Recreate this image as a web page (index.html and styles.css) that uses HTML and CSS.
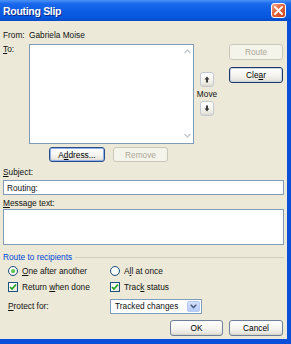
FILE: index.html
```html
<!DOCTYPE html>
<html>
<head>
<meta charset="utf-8">
<link rel="stylesheet" href="styles.css">
</head>
<body>
<div class="window">
  <div class="titlebar">
    <span class="title">Routing Slip</span>
    <span class="close"><svg width="9" height="9" viewBox="0 0 9 9"><path d="M1 1L8 8M8 1L1 8" stroke="#fff" stroke-width="1.8" stroke-linecap="round"/></svg></span>
  </div>
  <div class="body">
    <div class="from-row"><span class="lead">From:</span><span>Gabriela Moise</span></div>
    <div class="to-section">
      <span class="lead"><u>T</u>o:</span>
      <div class="listbox">
        <div class="scroll">
          <svg width="7" height="5" viewBox="0 0 7 5"><path d="M0.5 4L3.5 1L6.5 4" fill="none" stroke="#C2C6CC" stroke-width="1.3"/></svg>
          <svg width="7" height="5" viewBox="0 0 7 5"><path d="M0.5 1L3.5 4L6.5 1" fill="none" stroke="#C2C6CC" stroke-width="1.3"/></svg>
        </div>
      </div>
      <div class="move-col">
        <span class="btn mini"><svg width="6" height="7" viewBox="0 0 6 7"><path d="M3 0.5L5.5 3.5H4V6.5H2V3.5H0.5Z" fill="#3A3A3A"/></svg></span>
        <span class="move-label">Move</span>
        <span class="btn mini"><svg width="6" height="7" viewBox="0 0 6 7"><path d="M3 6.5L5.5 3.5H4V0.5H2V3.5H0.5Z" fill="#3A3A3A"/></svg></span>
      </div>
      <div class="btn-col">
        <span class="btn wide disabled">Route</span>
        <span class="btn wide strong">Cle<u>a</u>r</span>
      </div>
    </div>
    <div class="addr-row">
      <span class="btn focus addr">A<u>d</u>dress...</span>
      <span class="btn disabled remove">Remove</span>
    </div>
    <div class="field-label"><u>S</u>ubject:</div>
    <div class="textbox subject">Routing:</div>
    <div class="field-label msg"><u>M</u>essage text:</div>
    <div class="textbox message"></div>
    <div class="group-title"><span>Route to recipients</span><span class="rule"></span></div>
    <div class="options">
      <div class="opt"><span class="radio checked"></span><span><u>O</u>ne after another</span></div>
      <div class="opt"><span class="radio"></span><span>A<u>l</u>l at once</span></div>
      <div class="opt"><span class="check"><svg width="8" height="8" viewBox="0 0 8 8"><path d="M1 4L3 6L7 1.5" fill="none" stroke="#21A121" stroke-width="1.7"/></svg></span><span>Return <u>w</u>hen done</span></div>
      <div class="opt"><span class="check"><svg width="8" height="8" viewBox="0 0 8 8"><path d="M1 4L3 6L7 1.5" fill="none" stroke="#21A121" stroke-width="1.7"/></svg></span><span>Trac<u>k</u> status</span></div>
      <div class="opt"><span><u>P</u>rotect for:</span></div>
      <div class="opt">
        <div class="select"><span class="sel-text">Tracked changes</span><span class="sel-btn"><svg width="7" height="5" viewBox="0 0 7 5"><path d="M0.7 0.8L3.5 3.6L6.3 0.8" fill="none" stroke="#4D6185" stroke-width="1.6"/></svg></span></div>
      </div>
    </div>
    <div class="footer">
      <span class="btn ok">OK</span>
      <span class="btn cancel">Cancel</span>
    </div>
  </div>
</div>
</body>
</html>
```
FILE: styles.css
```css
* { box-sizing: border-box; }
html, body { margin: 0; padding: 0; }
body {
  width: 291px;
  height: 344px;
  overflow: hidden;
  background: #ECE9D8;
  font-family: "Liberation Sans", Arial, sans-serif;
  font-size: 8.3px;
  line-height: 10px;
  color: #111;
}
u { text-decoration: underline; text-underline-offset: 1px; }
.window { display: flex; flex-direction: column; height: 344px; }
.titlebar {
  height: 21px;
  flex: none;
  display: flex;
  align-items: center;
  justify-content: space-between;
  padding: 0 5px 0 3px;
  background: linear-gradient(#4A92F8 0%, #1A68EC 18%, #0A5CE4 55%, #0656DC 85%, #0449C8 100%);
}
.title {
  color: #fff;
  font-weight: bold;
  font-size: 10.5px;
  letter-spacing: -0.3px;
  text-shadow: 1px 1px 0 #0A2A8A;
}
.close {
  width: 15px;
  height: 15px;
  border: 1px solid #fff;
  border-radius: 3px;
  background: linear-gradient(135deg, #F2A98C 0%, #E2643C 45%, #C9441F 100%);
  display: flex;
  align-items: center;
  justify-content: center;
}
.body {
  flex: 1;
  display: flex;
  flex-direction: column;
  padding: 9px 3px 0 3px;
  border-right: 4px solid #0B4FD8;
  border-bottom: 5px solid #0B4FD8;
}
.from-row { display: flex; height: 10px; }
.lead { width: 26px; flex: none; }
.to-section { margin-top: 4px; display: flex; align-items: flex-start; }
.listbox {
  width: 165px;
  height: 100px;
  background: #fff;
  border: 1px solid #7F9DB9;
  display: flex;
  justify-content: flex-end;
}
.scroll {
  width: 11px;
  display: flex;
  flex-direction: column;
  justify-content: space-between;
  align-items: center;
  padding: 4px 0 5px;
}
.btn {
  display: flex;
  align-items: center;
  justify-content: center;
  border: 1px solid #4E6A8E;
  border-radius: 3px;
  background: linear-gradient(#FFFFFF 0%, #F6F5F1 50%, #E9E7DF 85%, #D8D3C6 100%);
  color: #000;
}
.btn.disabled {
  border-color: #C9C7BA;
  background: #F5F4EA;
  color: #ACA899;
}
.btn.strong { border-color: #1E3A66; box-shadow: inset 0 0 0 1px #C8D3E4; }
.btn.focus { border-color: #2B4E86; box-shadow: inset 0 0 0 1px #8FB0EA; }
.move-col {
  margin-left: 3px;
  margin-top: 28px;
  width: 20px;
  display: flex;
  flex-direction: column;
  align-items: center;
  gap: 2px;
}
.btn.mini { width: 14px; height: 15px; border-color: #C4C8D0; }
.move-label { height: 10px; }
.btn-col { margin-left: 12px; display: flex; flex-direction: column; gap: 7px; }
.btn.wide { width: 54px; height: 16px; }
.addr-row { margin-top: 3px; padding-left: 46px; display: flex; gap: 8px; }
.addr { width: 56px; height: 15px; }
.remove { width: 55px; height: 15px; }
.field-label { margin-top: 5px; height: 10px; }
.field-label.msg { margin-top: 3px; }
.textbox { background: #fff; border: 1px solid #7F9DB9; }
.subject { margin-top: 3px; height: 15px; padding: 2px 0 0 3px; }
.message { margin-top: 1px; height: 36px; }
.group-title {
  margin-top: 7px;
  height: 10px;
  display: flex;
  align-items: center;
  color: #0046D5;
}
.rule { flex: 1; height: 1px; background: #D0D0BF; margin-left: 3px; }
.options {
  margin-top: 1px;
  padding-left: 5px;
  display: grid;
  grid-template-columns: 102px auto;
  grid-template-rows: 16px 16px 22px;
}
.opt { display: flex; align-items: center; gap: 4px; }
.radio {
  width: 10px;
  height: 10px;
  border: 1px solid #1C5180;
  border-radius: 50%;
  background: radial-gradient(circle at 40% 40%, #FFFFFF 30%, #E2E1D8 100%);
  display: flex;
  align-items: center;
  justify-content: center;
}
.radio.checked::after {
  content: "";
  width: 4px;
  height: 4px;
  border-radius: 50%;
  background: radial-gradient(circle at 35% 35%, #7ADB5E, #21A121);
}
.check {
  width: 10px;
  height: 10px;
  border: 1px solid #1C5180;
  background: linear-gradient(135deg, #FFFFFF 30%, #E2E1D8 100%);
  display: flex;
  align-items: center;
  justify-content: center;
}
.select {
  width: 92px;
  height: 15px;
  background: #fff;
  border: 1px solid #7F9DB9;
  display: flex;
  align-items: center;
  justify-content: space-between;
  padding: 1px;
}
.sel-text { padding-left: 3px; }
.sel-btn {
  width: 13px;
  height: 11px;
  border-radius: 2px;
  background: linear-gradient(#D2E0FB, #B7CDF8);
  border: 1px solid #B6C9F3;
  display: flex;
  align-items: center;
  justify-content: center;
}
.footer {
  margin-top: 3px;
  padding-right: 1px;
  display: flex;
  justify-content: flex-end;
  gap: 6px;
}
.ok { width: 53px; height: 16px; border-color: #6D7F99; }
.cancel { width: 54px; height: 16px; border-color: #6D7F99; }
```
